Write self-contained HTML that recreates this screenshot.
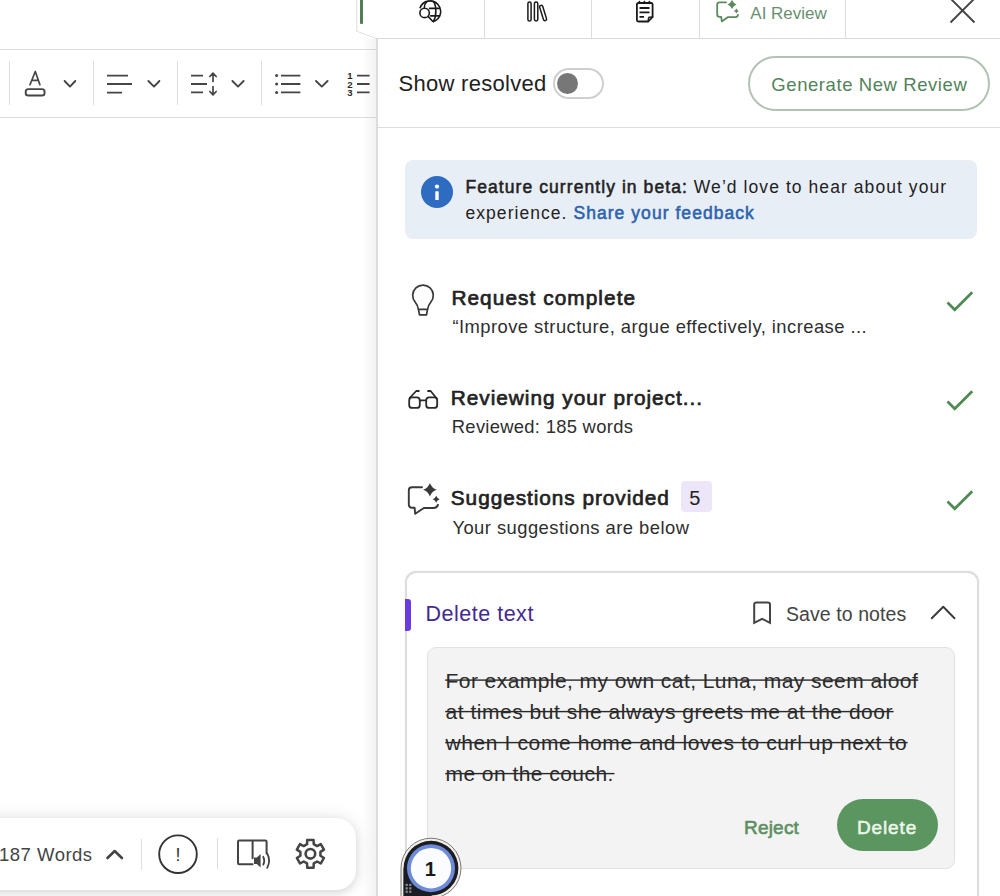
<!DOCTYPE html>
<html><head><meta charset="utf-8">
<style>
html,body{margin:0;padding:0;width:1000px;height:896px;overflow:hidden;background:#fff;}
body{position:relative;font-family:"Liberation Sans",sans-serif;color:#222;}
.a{position:absolute;}
.t{position:absolute;line-height:1;white-space:nowrap;}
svg{position:absolute;overflow:visible;}
</style></head><body>

<!-- LEFT DOC AREA -->
<div class="a" style="left:0;top:49px;width:377px;height:1px;background:#dedede"></div>
<div class="a" style="left:0;top:117px;width:377px;height:1px;background:#dedede"></div>
<div class="a" style="left:9px;top:61px;width:1px;height:44px;background:#dedede"></div>
<div class="a" style="left:93px;top:61px;width:1px;height:44px;background:#dedede"></div>
<div class="a" style="left:177px;top:61px;width:1px;height:44px;background:#dedede"></div>
<div class="a" style="left:261px;top:61px;width:1px;height:44px;background:#dedede"></div>

<!-- word bar -->
<div class="a" style="left:-30px;top:818px;width:386px;height:71.5px;background:#fff;border-radius:20px;box-shadow:0 3px 8px rgba(0,0,0,0.10),0 0 18px rgba(0,0,0,0.10)"></div>
<div class="a" style="left:141px;top:839px;width:1px;height:31px;background:#ddd"></div>
<div class="a" style="left:217px;top:838px;width:1px;height:31px;background:#ddd"></div>

<!-- TAB BAR -->
<div class="a" style="left:362px;top:39px;width:14px;height:857px;background:linear-gradient(to right,rgba(0,0,0,0),rgba(0,0,0,0.05))"></div>
<svg width="1000" height="60" style="left:0;top:0"><path d="M357,-2 V31.2 L376.5,38.5 H1002" fill="#fff" stroke="#dadada" stroke-width="1.2"/><path d="M357.5,0 V31 L376.5,38 H1000 V0 Z" fill="#fff"/></svg>
<div class="a" style="left:360.2px;top:0;width:2.6px;height:23.6px;background:#4f7f53;border-radius:0 0 1px 1px"></div>
<div class="a" style="left:484px;top:0;width:1px;height:38px;background:#dcdcdc"></div>
<div class="a" style="left:591px;top:0;width:1px;height:38px;background:#dcdcdc"></div>
<div class="a" style="left:699px;top:0;width:1px;height:38px;background:#dcdcdc"></div>
<div class="a" style="left:845px;top:0;width:1px;height:38px;background:#dcdcdc"></div>

<!-- PANEL -->
<div class="a" style="left:376px;top:39px;width:622px;height:857px;background:#fff;border-left:2px solid #dcdcdc"></div>
<div class="a" style="left:378px;top:127px;width:622px;height:1px;background:#dedede"></div>

<div class="a" style="left:553px;top:68px;width:47px;height:27px;border:2px solid #cfcfcf;border-radius:16px;background:#fff"></div>
<div class="a" style="left:557px;top:73px;width:21px;height:21px;border-radius:50%;background:#777"></div>
<div class="a" style="left:748px;top:56px;width:238px;height:51px;border:2px solid #b4c2b5;border-radius:28px;background:#fff"></div>

<!-- info box -->
<div class="a" style="left:405px;top:160px;width:572px;height:79px;background:#e8eef6;border-radius:8px"></div>
<div class="a" style="left:421px;top:176px;width:32px;height:32px;border-radius:50%;background:#2d6cc0"></div>

<!-- badge 5 -->
<div class="a" style="left:681px;top:481px;width:31px;height:31px;border-radius:4px;background:#ece6f8"></div>

<!-- card -->
<div class="a" style="left:404.5px;top:571px;width:570.5px;height:360px;border:2px solid #dcdcdc;border-radius:11px;background:#fff;box-shadow:0 0 3px rgba(0,0,0,0.05)"></div>
<div class="a" style="left:405px;top:599px;width:6px;height:32px;background:#6a3be0;border-radius:0 3px 3px 0"></div>
<div class="a" style="left:427px;top:647px;width:526px;height:220px;background:#f3f3f3;border:1px solid #e2e2e2;border-radius:9px"></div>
<div class="a" style="left:837px;top:799px;width:101px;height:52px;border-radius:26px;background:#5b9560"></div>

<div class="t" style="left:750.3px;top:4.5px;font-size:17px;color:#6a9070;">AI Review</div>
<div class="t" style="left:398.5px;top:73.0px;font-size:22px;color:#222;letter-spacing:0.290px;">Show resolved</div>
<div class="t" style="left:771.3px;top:76.0px;font-size:18.5px;color:#52835a;letter-spacing:0.578px;">Generate New Review</div>
<div class="t" style="left:465.5px;top:179.0px;font-size:17.5px;color:#222;letter-spacing:1.070px;"><span style="-webkit-text-stroke:0.55px #222">Feature currently in beta:</span> We’d love to hear about your</div>
<div class="t" style="left:465.5px;top:205.4px;font-size:17.5px;color:#222;letter-spacing:1.050px;">experience. <span style="color:#2b63ad;-webkit-text-stroke:0.55px #2b63ad">Share your feedback</span></div>
<div class="t" style="left:451.4px;top:288.0px;font-size:20.8px;color:#222;letter-spacing:1.070px;-webkit-text-stroke:0.7px #222;">Request complete</div>
<div class="t" style="left:452.4px;top:317.6px;font-size:18.4px;color:#2e2e2e;letter-spacing:0.450px;">“Improve structure, argue effectively, increase ...</div>
<div class="t" style="left:450.8px;top:388.4px;font-size:20.8px;color:#222;letter-spacing:0.980px;-webkit-text-stroke:0.7px #222;">Reviewing your project...</div>
<div class="t" style="left:451.8px;top:418.2px;font-size:18.4px;color:#2e2e2e;letter-spacing:0.290px;">Reviewed: 185 words</div>
<div class="t" style="left:450.8px;top:488.4px;font-size:20.8px;color:#222;letter-spacing:0.950px;-webkit-text-stroke:0.7px #222;">Suggestions provided</div>
<div class="t" style="left:452.4px;top:519.2px;font-size:18.4px;color:#2e2e2e;letter-spacing:0.450px;">Your suggestions are below</div>
<div class="t" style="left:425.4px;top:603.5px;font-size:21.5px;color:#432a8e;letter-spacing:0.520px;">Delete text</div>
<div class="t" style="left:786.0px;top:605.0px;font-size:19.5px;color:#444;letter-spacing:0.080px;">Save to notes</div>
<div class="t" style="left:445.5px;top:669.5px;font-size:21px;color:#2a2a2a;letter-spacing:0.440px;">For example, my own cat, Luna, may seem aloof</div>
<div class="t" style="left:445.5px;top:701.0px;font-size:21px;color:#2a2a2a;letter-spacing:0.530px;">at times but she always greets me at the door</div>
<div class="t" style="left:445.5px;top:732.0px;font-size:21px;color:#2a2a2a;letter-spacing:0.610px;">when I come home and loves to curl up next to</div>
<div class="t" style="left:445.5px;top:762.5px;font-size:21px;color:#2a2a2a;letter-spacing:0.450px;">me on the couch.</div>
<svg width="1000" height="896" style="left:0;top:0"><rect x="445.2" y="679.4" width="473.0" height="1.4" fill="#2a2a2a"/><rect x="445.2" y="710.9" width="448.4" height="1.4" fill="#2a2a2a"/><rect x="445.2" y="741.9" width="462.4" height="1.4" fill="#2a2a2a"/><rect x="445.2" y="772.9" width="169.3" height="1.4" fill="#2a2a2a"/></svg>
<div class="t" style="left:744.0px;top:817.8px;font-size:19px;color:#5b8f5f;letter-spacing:0.200px;-webkit-text-stroke:0.6px #5b8f5f;">Reject</div>
<div class="t" style="left:857.0px;top:817.8px;font-size:19px;color:#eaf6e8;letter-spacing:0.860px;-webkit-text-stroke:0.6px #eaf6e8;">Delete</div>
<div class="t" style="left:-1.0px;top:846.2px;font-size:18.5px;color:#444;letter-spacing:0.500px;">187 Words</div>
<div class="t" style="left:689.2px;top:488.4px;font-size:20px;color:#222;">5</div>

<svg width="1000" height="896" viewBox="0 0 1000 896" style="left:0;top:0" fill="none" stroke-linecap="round" stroke-linejoin="round">
<!-- toolbar icons -->
<g stroke="#454545" stroke-width="1.7">
 <path d="M30,84.7 L35.3,71.5 L39.9,84.7 M32.1,80.3 H38.4"/>
 <rect x="25.7" y="89.1" width="18.9" height="6.4" rx="2.6" stroke-width="1.9"/>
 <path d="M64.6,81 L70,86.6 L75.3,81" stroke-width="1.9"/>
 <path d="M107,75.6 H128 M107,84 H132 M107,92.6 H122" stroke-width="1.9" stroke-linecap="butt"/>
 <path d="M148.4,81 L154,86.6 L159.4,81" stroke-width="1.9"/>
 <path d="M191,75.6 H203 M191,84 H207 M191,92.4 H203" stroke-width="1.9" stroke-linecap="butt"/>
 <path d="M213,73.5 V81.5 M213,86.5 V94.5 M209.8,76.5 L213,73.2 L216.2,76.5 M209.8,91.5 L213,94.8 L216.2,91.5" stroke-width="1.7"/>
 <path d="M232.4,81 L238,86.6 L243.6,81" stroke-width="1.9"/>
 <path d="M281,75.6 H300.4 M281,84 H300.4 M281,92.4 H300.4" stroke-width="1.9" stroke-linecap="butt"/>
 <path d="M316,81 L321.8,86.6 L327.6,81" stroke-width="1.9"/>
 <path d="M357,75.6 H369.6 M357,84 H369.6 M357,92.4 H369.6" stroke-width="1.9" stroke-linecap="butt"/>
</g>
<g fill="#454545">
 <circle cx="276.6" cy="75.6" r="1.5"/><circle cx="276.6" cy="84" r="1.5"/><circle cx="276.6" cy="92.4" r="1.5"/>
</g>
<text x="350" y="79.2" font-size="9.6" font-weight="bold" fill="#2a2a2a" text-anchor="middle" font-family="Liberation Sans">1</text>
<text x="350" y="87.6" font-size="9.6" font-weight="bold" fill="#2a2a2a" text-anchor="middle" font-family="Liberation Sans">2</text>
<text x="350" y="96" font-size="9.6" font-weight="bold" fill="#2a2a2a" text-anchor="middle" font-family="Liberation Sans">3</text>

<!-- tab icons -->
<g stroke="#1a1a1a" stroke-width="1.6">
 <path d="M420.2,7.6 A10.6,10.6 0 1 1 433.4,21.6"/>
 <path d="M426.6,1.8 C425,3.5 424.4,5.5 424.3,7.6"/>
 <path d="M433.4,1.6 C436.5,5.5 436.8,16 433.4,21.6"/>
 <path d="M429.6,8.4 H439.6 M430.6,15.9 H439.6"/>
 <circle cx="424.6" cy="12.9" r="4.7"/>
 <path d="M428.1,16.4 L432.6,21.2"/>
</g>
<g stroke="#1a1a1a" stroke-width="1.5">
 <rect x="527.9" y="2" width="3.2" height="19" rx="1.6"/>
 <rect x="534.4" y="2" width="3.4" height="19" rx="1.7"/>
 <rect x="541.5" y="5" width="3.2" height="16" rx="1.6" transform="rotate(-17 543.1 13)"/>
</g>
<g stroke="#1a1a1a" stroke-width="1.8">
 <path d="M648.3,21.5 H638.5 Q636.9,21.5 636.9,20 V4.5 Q636.9,3 638.5,3 H651 Q652.6,3 652.6,4.5 V17 Z"/>
 <path d="M652.6,17 L649,17.3 Q648.2,18 648.3,21.5" stroke-width="1.6"/>
 <path d="M639.4,1.6 V3 M644.4,1.6 V3 M649.4,1.6 V3" stroke-width="1.7"/>
 <path d="M639.5,8 H649.5 M639.5,12.4 H649.5 M639.5,16.8 H644" stroke-width="1.8" stroke-linecap="butt"/>
</g>
<g stroke="#5b8a5f" stroke-width="1.8">
 <path d="M726,2.4 H719.5 Q717.2,2.4 717.2,4.7 V14.5 Q717.2,16.8 719.5,16.8 H721.2 L721.8,21.4 L727.6,17.2 H735 Q737.6,17.2 738,14.8"/>
</g>
<g fill="#5b8a5f">
 <path d="M732,-0.09999999999999964 Q733.26,3.14 736.5,4.4 Q733.26,5.66 732,8.9 Q730.74,5.66 727.5,4.4 Q730.74,3.14 732,-0.09999999999999964Z"/>
 <path d="M736.4,8.6 Q737.07,10.33 738.8,11 Q737.07,11.67 736.4,13.4 Q735.73,11.67 734.0,11 Q735.73,10.33 736.4,8.6Z"/>
</g>
<path d="M950.5,-1.5 L974.5,22.5 M974.5,-1.5 L950.5,22.5" stroke="#444" stroke-width="1.9" stroke-linecap="butt"/>

<!-- info i -->
<g fill="#fff"><circle cx="437" cy="186.6" r="2.1"/><rect x="435.3" y="191.2" width="3.4" height="8.8" rx="0.5"/></g>

<!-- step icons -->
<g stroke="#383838" stroke-width="1.7">
 <path d="M418.4,309.3 C418.1,305.6 417,304.3 415.2,302.1 A10.3,10.3 0 1 1 430.8,302.1 C429,304.3 427.9,305.6 427.6,309.3 Z"/>
 <path d="M418.5,309.5 L419.5,314.8 H426.5 L427.5,309.5"/>
</g>
<g stroke="#2a2a2a" stroke-width="1.8">
 <rect x="409.2" y="397.4" width="10.6" height="10.5" rx="3"/>
 <rect x="426.2" y="397.4" width="11" height="10.5" rx="3"/>
 <path d="M419.8,400.3 H426.2"/>
 <path d="M409.6,398 L416.2,391 H418.8 M436.8,398.5 L430.6,391 H428"/>
</g>
<g stroke="#3a3a3a" stroke-width="1.9">
 <path d="M422,487.3 H412 Q408.8,487.3 408.8,490.5 V504.5 Q408.8,507.7 412,507.7 H414.6 L415.2,513.8 L423.9,508 H433.5 Q437.2,508 438,504.8"/>
</g>
<g fill="#3a3a3a">
 <path d="M429.9,482.9 Q431.67,487.93 436.7,489.7 Q431.67,491.47 429.9,496.5 Q428.13,491.47 423.09999999999997,489.7 Q428.13,487.93 429.9,482.9Z"/>
 <path d="M436.2,495.7 Q437.11,498.29 439.7,499.2 Q437.11,500.11 436.2,502.7 Q435.29,500.11 432.7,499.2 Q435.29,498.29 436.2,495.7Z"/>
</g>
<g stroke="#4f8a55" stroke-width="2.8" stroke-linecap="butt" stroke-linejoin="miter">
 <path d="M947.5,302.5 L954.75,309.75 L972.25,292.25"/>
 <path d="M947.5,401.5 L954.75,408.75 L972.25,391.25"/>
 <path d="M947.5,501.5 L954.75,508.75 L972.25,491.25"/>
</g>

<!-- card icons -->
<g stroke="#444" stroke-width="2">
 <path d="M754.2,622.8 V604.6 Q754.2,602.4 756.4,602.4 H767.8 Q770,602.4 770,604.6 V622.8 L762.1,618.8 Z" stroke-linejoin="miter"/>
 <path d="M931.75,618.25 L943.25,606.75 L954.5,618.25" stroke="#3a3a3a" stroke-width="1.9"/>
</g>

<!-- word bar icons -->
<g stroke="#444">
 <path d="M107.5,858 L114.7,851 L121.9,858" stroke-width="2.6"/>
 <circle cx="178" cy="854.2" r="18.8" stroke="#333" stroke-width="1.9"/>
 <path d="M252.6,864.3 H239.2 Q238,864.3 238,863.1 V841.8 Q238,840.6 239.2,840.6 H265.4 Q266.6,840.6 266.6,841.8 V853.5 M252.6,841 V858.3" stroke-width="2"/>
 <path d="M307.08,844.16 L307.21,839.96 L313.59,839.96 L313.72,844.16 L317.09,846.10 L320.79,844.12 L323.98,849.65 L320.41,851.85 L320.41,855.75 L323.98,857.95 L320.79,863.48 L317.09,861.50 L313.72,863.44 L313.59,867.64 L307.21,867.64 L307.08,863.44 L303.71,861.50 L300.01,863.48 L296.82,857.95 L300.39,855.75 L300.39,851.85 L296.82,849.65 L300.01,844.12 L303.71,846.10Z" stroke-width="2.5"/>
 <circle cx="310.4" cy="853.8" r="4.8" stroke-width="2.6"/>
</g>
<g fill="#444">
 <path d="M254,857.5 H256.8 L260.6,854 V867.5 L256.8,864 H254 Z"/>
</g>
<path d="M263.3,856.8 Q265.2,860.7 263.3,864.6 M267.2,853.5 Q271,860.7 267.2,867.9" stroke="#444" stroke-width="1.8"/>
<text x="178" y="861" font-size="18" fill="#333" text-anchor="middle" font-family="Liberation Sans">!</text>

<!-- badge -->
<path d="M401,898 V868.2 A30,30 0 1 1 431,898.2" fill="#f3efe6" stroke="#6b6b6b" stroke-width="0.9"/>
<path d="M403.6,898 V868.2 A27.4,27.4 0 1 1 431,895.6" fill="#1c1c24"/>
<rect x="403.6" y="868" width="28" height="30" fill="#1c1c24"/>
<circle cx="431" cy="868.2" r="24" fill="#6d8bd8"/>
<circle cx="431" cy="868.2" r="20.2" fill="#fbfcff"/>
<text x="430.3" y="875.5" font-size="20" font-weight="bold" fill="#1a1a1a" text-anchor="middle" font-family="Liberation Sans">1</text>
<g fill="#8a8a8a"><rect x="405.6" y="883.8" width="2.2" height="2.2"/><rect x="409.2" y="883.8" width="2.2" height="2.2"/><rect x="405.6" y="887.2" width="2.2" height="2.2"/><rect x="409.2" y="887.2" width="2.2" height="2.2"/><rect x="405.6" y="890.6" width="2.2" height="2.2"/><rect x="409.2" y="890.6" width="2.2" height="2.2"/></g>
</svg>
</body></html>
